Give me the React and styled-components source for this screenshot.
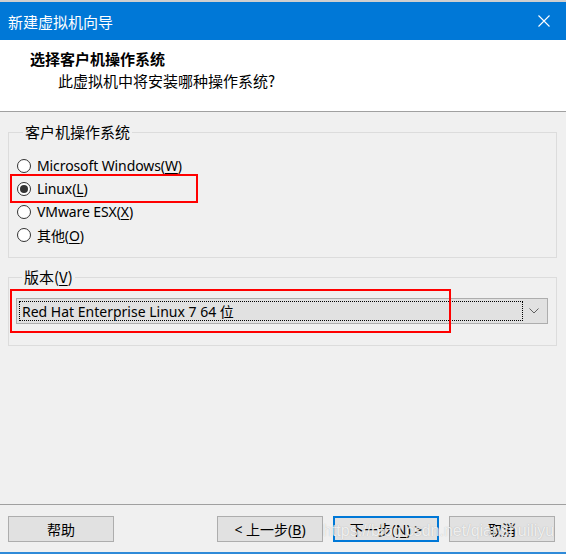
import styled, { createGlobalStyle } from "styled-components";

const GlobalStyle = createGlobalStyle`
  html, body {
    margin: 0;
    padding: 0;
    background: #f0f0f0;
  }
  body {
    font-family: "Noto Sans", "Noto Sans CJK SC", sans-serif;
    font-size: 15px;
    color: #000;
  }
`;

const Window = styled.div`
  position: relative;
  width: 566px;
  height: 554px;
  display: flex;
  flex-direction: column;
  background: #f0f0f0;
  border-top: 2px solid #cfcfcf;
  border-bottom: 2px solid #2f8ad8;
  box-sizing: border-box;
  overflow: hidden;
`;

const TitleBar = styled.div`
  height: 38px;
  flex-shrink: 0;
  background: #0078d7;
  color: #fff;
  display: flex;
  align-items: center;
  justify-content: space-between;
  padding-left: 8px;
  font-family: "Noto Sans CJK SC", sans-serif;
  font-size: 15px;
`;

const CloseButton = styled.div`
  width: 46px;
  height: 38px;
  display: flex;
  align-items: center;
  justify-content: center;
  margin-right: -1px;
`;

const Header = styled.div`
  height: 72px;
  flex-shrink: 0;
  background: #fff;
  border-bottom: 1px solid #a0a0a0;
  box-sizing: border-box;
  padding: 9px 0 0 30px;
  font-family: "Noto Sans CJK SC", sans-serif;
`;

const HeaderTitle = styled.div`
  font-weight: bold;
  font-size: 15px;
  line-height: 20px;
`;

const HeaderSub = styled.div`
  font-size: 15px;
  line-height: 20px;
  margin: 2px 0 0 28px;
`;

const Body = styled.div`
  flex: 1;
  padding: 10px 9px 0 8px;
  display: flex;
  flex-direction: column;
  gap: 9px;
`;

const Group = styled.fieldset`
  margin: 0;
  border: 1px solid #dcdcdc;
  padding: ${(p) => p.$pad};
  min-width: 0;
`;

const Legend = styled.legend`
  margin-left: 6px;
  padding: 0 2px;
  font-family: "Noto Sans CJK SC", sans-serif;
  font-size: 15px;
  line-height: 20px;
  color: #000;
`;

const RadioList = styled.div`
  display: flex;
  flex-direction: column;
`;

const RadioRow = styled.label`
  display: flex;
  align-items: center;
  gap: 6px;
  height: 23px;
  font-family: "Noto Sans", "Noto Sans CJK SC", sans-serif;
  font-size: 14px;
  letter-spacing: -0.1px;
`;

const RadioCircle = styled.span`
  width: 14px;
  height: 14px;
  box-sizing: border-box;
  border: 1px solid #333;
  border-radius: 50%;
  background: #fff;
  display: flex;
  align-items: center;
  justify-content: center;
  flex-shrink: 0;

  &::after {
    content: "";
    width: 8px;
    height: 8px;
    border-radius: 50%;
    background: ${(p) => (p.$checked ? "#333" : "transparent")};
  }
`;

const U = styled.span`
  text-decoration: underline;
  text-underline-offset: 2px;
`;

const Combo = styled.div`
  height: 26px;
  box-sizing: border-box;
  background: #e1e1e1;
  border: 1px solid #adadad;
  display: flex;
  align-items: center;
  padding: 2px;
`;

const ComboValue = styled.div`
  flex: 1;
  height: 20px;
  box-sizing: border-box;
  border: 1px dotted #000;
  display: flex;
  align-items: center;
  padding-left: 2px;
  font-family: "Noto Sans", "Noto Sans CJK SC", sans-serif;
  font-size: 14px;
`;

const ComboArrow = styled.div`
  width: 22px;
  display: flex;
  align-items: center;
  justify-content: center;
`;

const Footer = styled.div`
  height: 48px;
  flex-shrink: 0;
  border-top: 1px solid #a0a0a0;
  box-sizing: border-box;
  display: flex;
  align-items: flex-start;
  padding: 11px 11px 0 8px;
  gap: 10px;
`;

const Spacer = styled.div`
  flex: 1;
`;

const Button = styled.div`
  width: 106px;
  height: 26px;
  box-sizing: border-box;
  background: #e1e1e1;
  border: ${(p) => (p.$focused ? "2px solid #0078d7" : "1px solid #adadad")};
  display: flex;
  align-items: center;
  justify-content: center;
  font-family: "Noto Sans", "Noto Sans CJK SC", sans-serif;
  font-size: 14px;
`;

const Highlight = styled.div`
  position: absolute;
  border: 2px solid #ff0000;
  box-sizing: border-box;
  pointer-events: none;
`;

const Watermark = styled.div`
  position: absolute;
  left: 323px;
  top: 520px;
  font-family: "Liberation Sans", sans-serif;
  font-size: 16px;
  color: rgba(255, 255, 255, 0.8);
  text-shadow: 0 0 1px rgba(120, 120, 120, 0.5);
  pointer-events: none;
  white-space: nowrap;
`;

const options = [
  { label: "Microsoft Windows", key: "W" },
  { label: "Linux", key: "L", checked: true },
  { label: "VMware ESX", key: "X" },
  { label: "其他", key: "O" },
];

export default function App() {
  return (
    <>
      <GlobalStyle />
      <Window>
        <TitleBar>
          新建虚拟机向导
          <CloseButton>
            <svg width="12" height="12" viewBox="0 0 12 12">
              <path d="M0.5 0.5 L11.5 11.5 M11.5 0.5 L0.5 11.5" stroke="#fff" strokeWidth="1.1" />
            </svg>
          </CloseButton>
        </TitleBar>
        <Header>
          <HeaderTitle>选择客户机操作系统</HeaderTitle>
          <HeaderSub>此虚拟机中将安装哪种操作系统?</HeaderSub>
        </Header>
        <Body>
          <Group $pad="12px 8px 11px 8px">
            <Legend>客户机操作系统</Legend>
            <RadioList>
              {options.map((o) => (
                <RadioRow key={o.key}>
                  <RadioCircle $checked={o.checked} />
                  <span>
                    {o.label}(<U>{o.key}</U>)
                  </span>
                </RadioRow>
              ))}
            </RadioList>
          </Group>
          <Group $pad="11px 8px 21px 7px">
            <Legend>
              版本(<U>V</U>)
            </Legend>
            <Combo>
              <ComboValue>Red Hat Enterprise Linux 7 64 位</ComboValue>
              <ComboArrow>
                <svg width="10" height="6" viewBox="0 0 10 6">
                  <path d="M0.5 0.5 L5 5 L9.5 0.5" fill="none" stroke="#606060" strokeWidth="1" />
                </svg>
              </ComboArrow>
            </Combo>
          </Group>
        </Body>
        <Footer>
          <Button>帮助</Button>
          <Spacer />
          <Button>&lt; 上一步(<U>B</U>)</Button>
          <Button $focused>
            下一步(<U>N</U>) &gt;
          </Button>
          <Button>取消</Button>
        </Footer>
        <Highlight style={{ left: 10, top: 172, width: 188, height: 29 }} />
        <Highlight style={{ left: 10, top: 287, width: 441, height: 44 }} />
        <Watermark>https://blog.csdn.net/qianshuiliyu</Watermark>
      </Window>
    </>
  );
}
